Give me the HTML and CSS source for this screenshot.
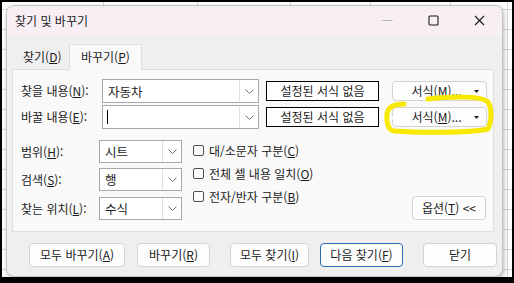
FILE: index.html
```html
<!DOCTYPE html>
<html lang="ko">
<head>
<meta charset="utf-8">
<title>찾기 및 바꾸기</title>
<link rel="stylesheet" href="styles.css">
</head>
<body>
<div class="screen">
  <div class="dialog">
    <div class="titlebar">
      <span class="title">찾기 및 바꾸기</span>
      <div class="winctl">
        <span class="ctl"><svg width="11" height="11" viewBox="0 0 11 11"><path d="M0.5 5.5H10.5" stroke="#b0b0b0" stroke-width="1"/></svg></span>
        <span class="ctl"><svg width="11" height="11" viewBox="0 0 11 11"><rect x="1" y="1" width="9" height="9" rx="1" fill="none" stroke="#1a1a1a" stroke-width="1.1"/></svg></span>
        <span class="ctl"><svg width="11" height="11" viewBox="0 0 11 11"><path d="M1 1L10 10M10 1L1 10" stroke="#1a1a1a" stroke-width="1.1"/></svg></span>
      </div>
    </div>
    <div class="body">
      <div class="tabs">
        <div class="tab">찾기(<u>D</u>)</div>
        <div class="tab active">바꾸기(<u>P</u>)</div>
      </div>
      <div class="panel">
        <div class="row">
          <span class="lbl wlbl">찾을 내용(<u>N</u>):</span>
          <div class="combo cwide"><span class="val">자동차</span><span class="drop"><svg width="9" height="5" viewBox="0 0 9 5"><path d="M0.5 0.5L4.5 4.5L8.5 0.5" fill="none" stroke="#707070"/></svg></span></div>
          <div class="fmtbox">설정된 서식 없음</div>
          <div class="btn fmt"><span>서식(<u>M</u>)...</span><svg class="tri" width="5" height="3" viewBox="0 0 5 3"><path d="M0 0H5L2.5 3Z" fill="#1a1a1a"/></svg></div>
        </div>
        <div class="row row2">
          <span class="lbl wlbl">바꿀 내용(<u>E</u>):</span>
          <div class="combo cwide"><span class="val"><span class="caret"></span></span><span class="drop"><svg width="9" height="5" viewBox="0 0 9 5"><path d="M0.5 0.5L4.5 4.5L8.5 0.5" fill="none" stroke="#707070"/></svg></span></div>
          <div class="fmtbox">설정된 서식 없음</div>
          <div class="btn fmt"><span>서식(<u>M</u>)...</span><svg class="tri" width="5" height="3" viewBox="0 0 5 3"><path d="M0 0H5L2.5 3Z" fill="#1a1a1a"/></svg></div>
        </div>
        <div class="lower">
          <div class="opts">
            <div class="orow">
              <span class="lbl slbl">범위(<u>H</u>):</span>
              <div class="combo csmall"><span class="val">시트</span><span class="drop"><svg width="9" height="5" viewBox="0 0 9 5"><path d="M0.5 0.5L4.5 4.5L8.5 0.5" fill="none" stroke="#707070"/></svg></span></div>
            </div>
            <div class="orow o2">
              <span class="lbl slbl">검색(<u>S</u>):</span>
              <div class="combo csmall"><span class="val">행</span><span class="drop"><svg width="9" height="5" viewBox="0 0 9 5"><path d="M0.5 0.5L4.5 4.5L8.5 0.5" fill="none" stroke="#707070"/></svg></span></div>
            </div>
            <div class="orow o3">
              <span class="lbl slbl">찾는 위치(<u>L</u>):</span>
              <div class="combo csmall"><span class="val">수식</span><span class="drop"><svg width="9" height="5" viewBox="0 0 9 5"><path d="M0.5 0.5L4.5 4.5L8.5 0.5" fill="none" stroke="#707070"/></svg></span></div>
            </div>
          </div>
          <div class="checks">
            <div class="chk"><span class="box"></span>대/소문자 구분(<u>C</u>)</div>
            <div class="chk"><span class="box"></span>전체 셀 내용 일치(<u>O</u>)</div>
            <div class="chk"><span class="box"></span>전자/반자 구분(<u>B</u>)</div>
          </div>
          <div class="btn optbtn">옵션(<u>T</u>) &lt;&lt;</div>
        </div>
      </div>
      <div class="actions">
        <div class="btn b1">모두 바꾸기(<u>A</u>)</div>
        <div class="btn b2">바꾸기(<u>R</u>)</div>
        <div class="btn b3">모두 찾기(<u>I</u>)</div>
        <div class="btn b4 default">다음 찾기(<u>F</u>)</div>
        <div class="btn b5">닫기</div>
      </div>
    </div>
  </div>
  <svg class="highlight" width="514" height="283" viewBox="0 0 514 283">
    <path d="M391 118 C 398 117, 405 117, 412 118" fill="none" stroke="#ffffff" stroke-width="3" stroke-linecap="round"/>
    <path d="M428 99 C 455 96, 482 96, 488 102 C 492 109, 492 121, 488 129 C 470 133, 420 133, 394 131 C 388 130, 386 122, 387 114 C 388 107, 393 104, 404 104" fill="none" stroke="#f7ea00" stroke-width="5" stroke-linecap="round" stroke-linejoin="round"/>
  </svg>
</div>
</body>
</html>
```

FILE: styles.css
```css
* { box-sizing: border-box; }
html, body { margin: 0; padding: 0; }
body {
  font-family: "Noto Sans CJK KR", "Noto Sans", sans-serif;
  font-size: 12px;
  color: #1b1b1b;
  background: #000;
}
u { text-decoration-thickness: 1px; text-underline-offset: 1px; }

.screen {
  position: relative;
  width: 514px;
  height: 283px;
  border-style: solid;
  border-color: #000;
  border-width: 2px 2px 6px 2px;
  background-color: #ffffff;
  background-image:
    linear-gradient(to right, #d6d6d6 1px, transparent 1px),
    linear-gradient(to right, #d6d6d6 1px, transparent 1px),
    linear-gradient(to right, #d6d6d6 1px, transparent 1px),
    linear-gradient(to right, #d6d6d6 1px, transparent 1px),
    linear-gradient(to right, #d6d6d6 1px, transparent 1px),
    linear-gradient(to right, #d6d6d6 1px, transparent 1px),
    linear-gradient(to bottom, #d6d6d6 1px, transparent 1px);
  background-size: 1px 100%, 1px 100%, 1px 100%, 1px 100%, 1px 100%, 1px 100%, 100% 20px;
  background-position: 101px 0, 195px 0, 288px 0, 368px 0, 448px 0, 505px 0, 0 7px;
  background-repeat: no-repeat, no-repeat, no-repeat, no-repeat, no-repeat, no-repeat, repeat;
  padding: 3px 0 0 4px;
  overflow: hidden;
}

.dialog {
  width: 497px;
  height: 272px;
  background: #efefef;
  border: 1px solid #c4c4c4;
  border-radius: 8px;
  box-shadow: 1px 2px 5px rgba(0, 0, 0, 0.28);
  overflow: hidden;
  display: flex;
  flex-direction: column;
}

.titlebar {
  height: 29px;
  flex: none;
  background: #f7eff3;
  display: flex;
  align-items: center;
  padding-left: 8px;
}
.title { font-size: 12px; line-height: 16px; color: #1a1a1a; }
.winctl { margin-left: auto; display: flex; height: 100%; }
.ctl {
  width: 46px;
  height: 100%;
  display: flex;
  align-items: center;
  justify-content: center;
}
.ctl svg { display: block; }

.body { padding: 9px 8px 0 5px; flex: 1; }

.tabs { display: flex; height: 25px; align-items: flex-end; }
.tab {
  height: 22px;
  padding: 0 7px 0 11px;
  line-height: 20px;
  width: 57px;
}
.tab.active {
  height: 26px;
  width: 73px;
  padding-left: 11px;
  line-height: 24px;
  background: #f9f9f9;
  border: 1px solid #dedede;
  border-bottom: none;
  border-radius: 2px 2px 0 0;
  margin-bottom: -1px;
  position: relative;
  z-index: 1;
}

.panel {
  width: 482px;
  height: 163px;
  background: #f9f9f9;
  border: 1px solid #dedede;
  padding: 9px 0 0 8px;
}

.row { display: flex; align-items: center; height: 24px; }
.row2 { margin-top: 2px; }

.lbl { flex: none; line-height: 16px; }
.wlbl { width: 81px; }
.slbl { width: 78px; }

.combo {
  flex: none;
  height: 24px;
  background: #fff;
  border: 1px solid #a8a8a8;
  display: flex;
  align-items: stretch;
}
.cwide { width: 157px; }
.csmall { width: 83px; height: 23px; }
.combo .val {
  flex: 1;
  display: flex;
  align-items: center;
  padding-left: 5px;
  font-size: 12.5px;
}
.combo .drop {
  width: 19px;
  border-left: 1px solid #e1e1e1;
  display: flex;
  align-items: center;
  justify-content: center;
}
.combo .drop svg { display: block; }
.caret { display: block; width: 1px; height: 14px; background: #000; margin-left: -1px; }

.fmtbox {
  flex: none;
  margin-left: 7px;
  width: 113px;
  height: 20px;
  border: 1px solid #000;
  background: #fff;
  text-align: center;
  line-height: 17px;
}

.btn {
  flex: none;
  height: 24px;
  background: #fdfdfd;
  border: 1px solid #d3d3d3;
  border-radius: 4px;
  display: flex;
  align-items: center;
  justify-content: center;
  line-height: 16px;
}
.fmt {
  margin-left: 13px;
  width: 95px;
  height: 20px;
  position: relative;
  padding-right: 6px;
}
.fmt .tri { position: absolute; right: 7px; top: 8px; }

.lower { display: flex; margin-top: 11px; }
.opts { flex: none; }
.orow { display: flex; align-items: center; }
.o2 { margin-top: 5px; }
.o3 { margin-top: 6px; }

.checks { margin-left: 11px; margin-top: -1px; }
.chk { display: flex; align-items: center; height: 23px; }
.box {
  width: 11px;
  height: 11px;
  border: 1px solid #4f4f4f;
  border-radius: 2px;
  background: #fbfbfb;
  margin-right: 5px;
}

.optbtn {
  margin-left: auto;
  margin-right: 7px;
  align-self: flex-end;
  width: 74px;
  height: 24px;
}

.actions { display: flex; margin-top: 11px; padding-left: 17px; }
.b1 { width: 96px; }
.b2 { width: 73px; margin-left: 12px; }
.b3 { width: 79px; margin-left: 20px; }
.b4 { width: 83px; margin-left: 11px; }
.b5 { width: 74px; margin-left: 20px; }
.default { border-color: #2d6ab8; }

.highlight { position: absolute; left: -2px; top: -2px; pointer-events: none; }
```
